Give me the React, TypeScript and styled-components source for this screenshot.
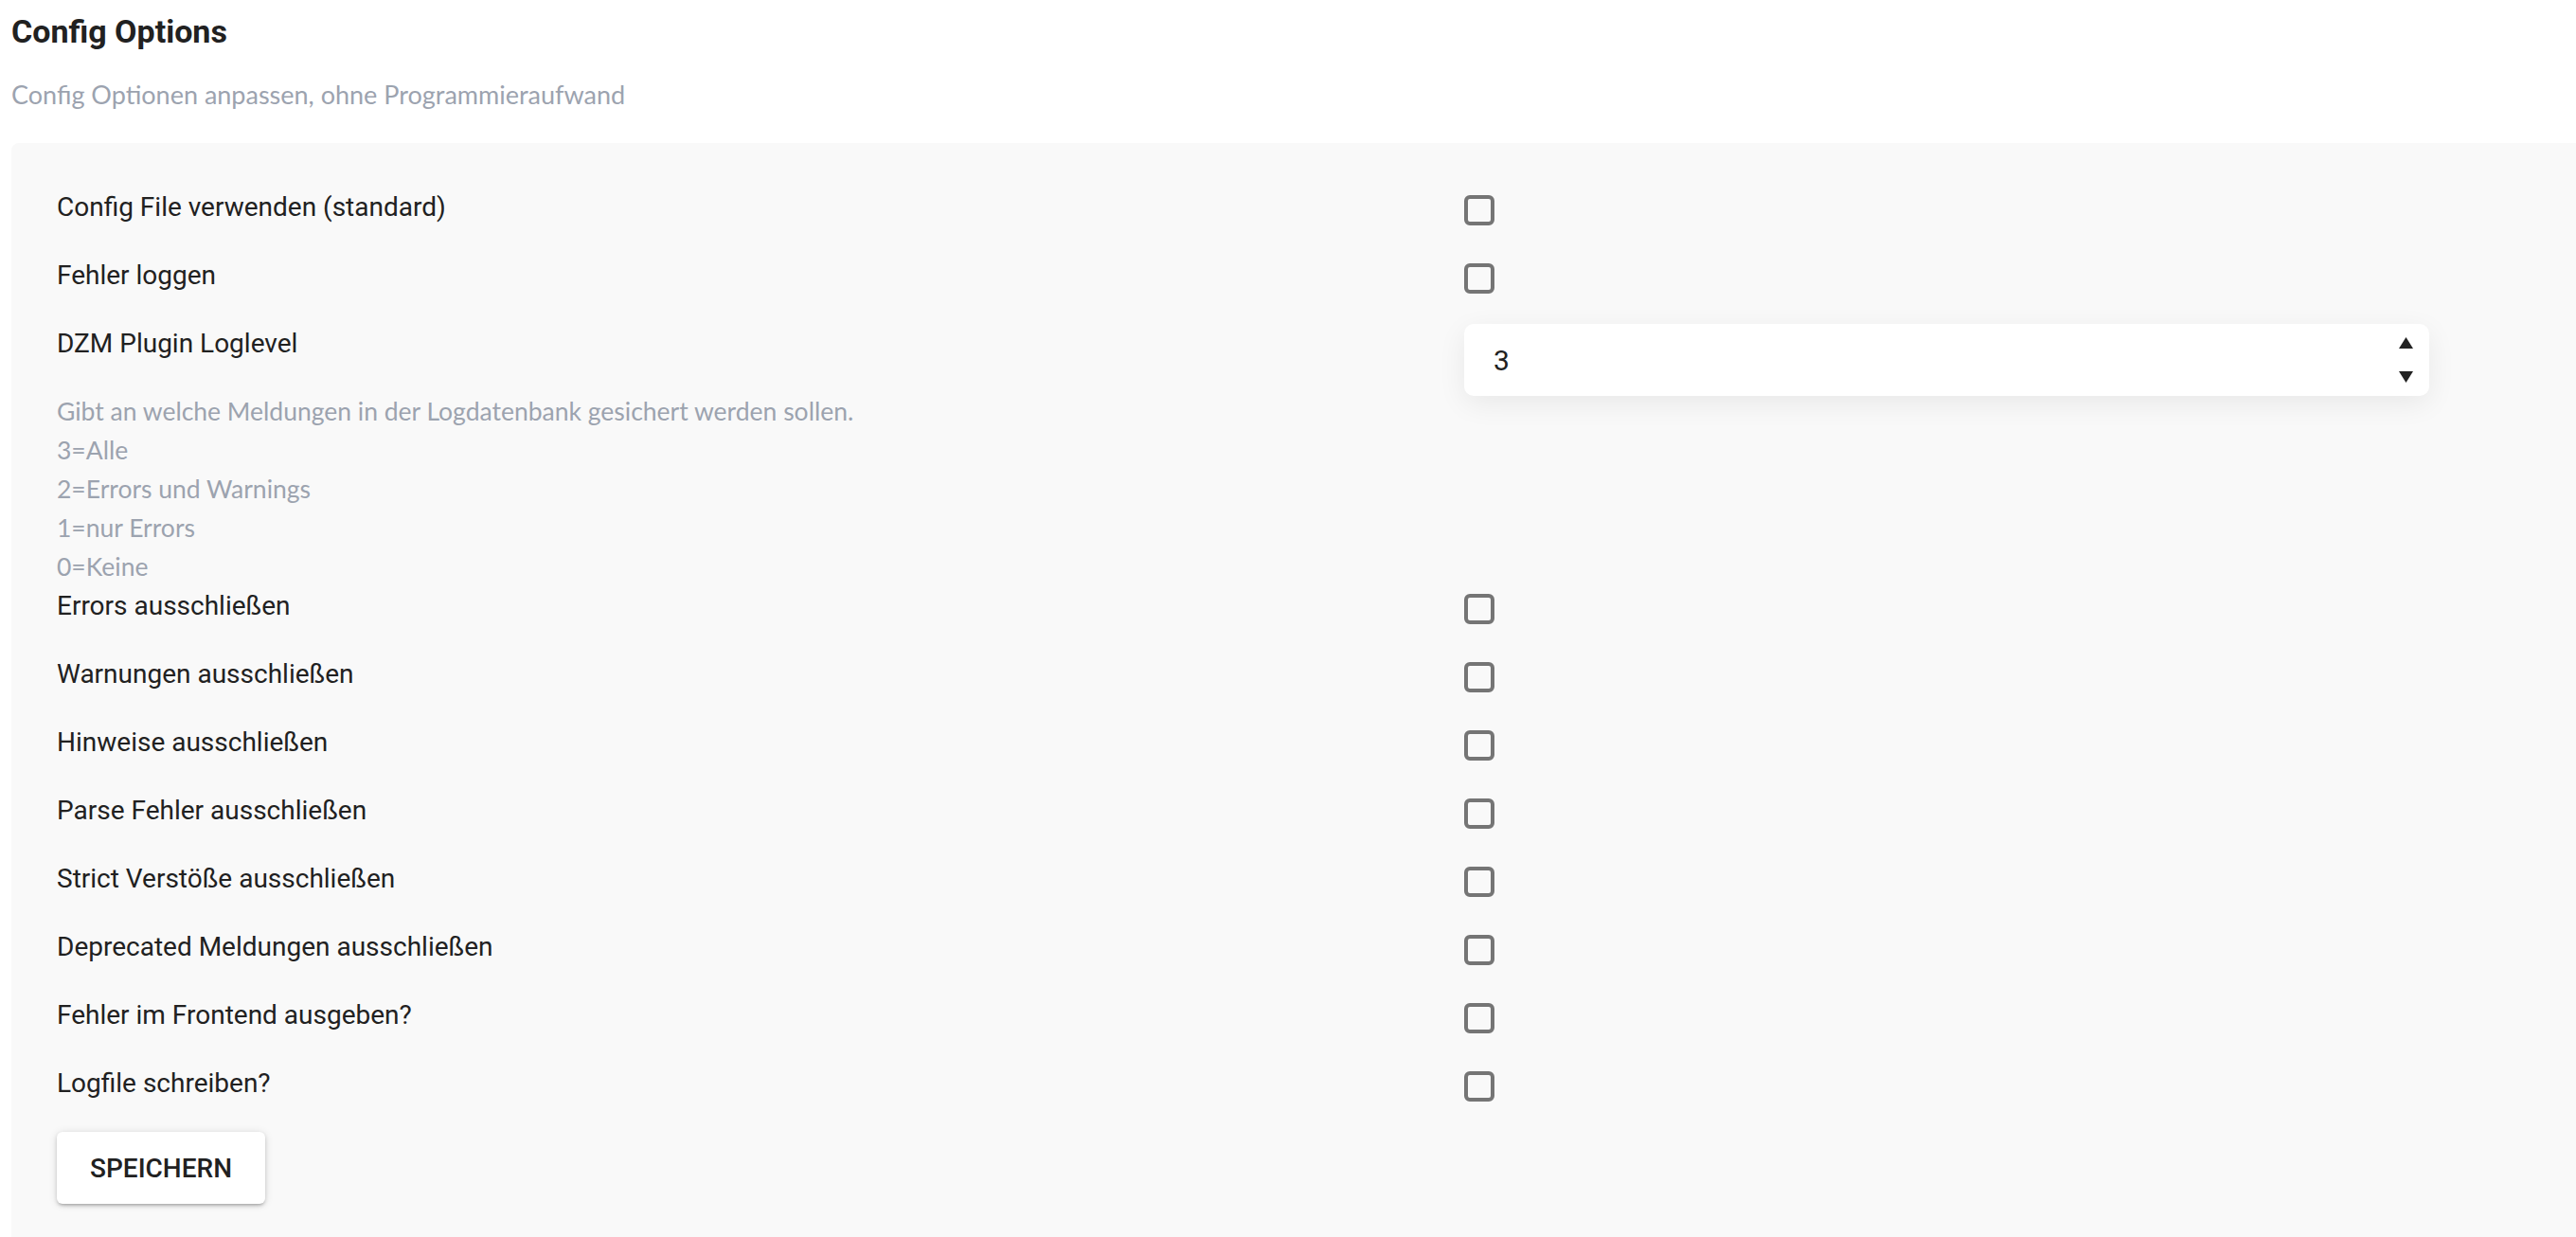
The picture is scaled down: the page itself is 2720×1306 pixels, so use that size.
import { FC, useState } from "react";
import styled, { createGlobalStyle } from "styled-components";

const GlobalStyle = createGlobalStyle`
  html, body {
    margin: 0;
    padding: 0;
    background: #ffffff;
  }
  body {
    font-family: Roboto, "Liberation Sans", sans-serif;
    color: #212121;
    overflow: hidden;
  }
`;

const Page = styled.div`
  padding: 12px 0 0 12px;
`;

const Title = styled.h2`
  margin: 0;
  font: 700 34px/42px Roboto, "Liberation Sans", sans-serif;
  color: #212121;
`;

const Subtitle = styled.p`
  margin: 25px 0 31px;
  font: 400 27px/41px Lato, "Noto Sans", sans-serif;
  color: #9ca3af;
`;

const Panel = styled.form`
  background: #f9f9f9;
  border-radius: 8px 0 0 0;
  padding: 47px 48px 48px;
`;

const Row = styled.div<{ $tight?: boolean }>`
  display: grid;
  grid-template-columns: 1486px 1fr;
  align-items: start;
  margin-bottom: ${(p) => (p.$tight ? 0 : 30)}px;
`;

const Label = styled.label`
  display: block;
  font: 400 28px/42px Roboto, "Liberation Sans", sans-serif;
  color: #212121;
`;

const Help = styled.div`
  margin-top: 30px;
  font: 400 26.5px/41px Lato, "Noto Sans", sans-serif;
  color: #9ca3af;
`;

const Check = styled.input`
  appearance: none;
  display: block;
  width: 32px;
  height: 32px;
  margin: 8px 0 0 0;
  border: 4px solid #757575;
  border-radius: 6px;
  background: transparent;
  cursor: pointer;

  &:checked {
    background: #1976d2;
    border-color: #1976d2;
  }
`;

const NumberField = styled.div`
  display: flex;
  align-items: center;
  width: 1019px;
  height: 76px;
  background: #ffffff;
  border-radius: 10px;
  box-shadow: 0 8px 30px rgba(0, 0, 0, 0.07);
`;

const NumberInput = styled.input`
  flex: 1;
  min-width: 0;
  height: 100%;
  border: 0;
  outline: 0;
  background: transparent;
  padding: 0 0 0 31px;
  font: 400 30px Roboto, "Liberation Sans", sans-serif;
  color: #212121;
  appearance: textfield;

  &::-webkit-inner-spin-button,
  &::-webkit-outer-spin-button {
    appearance: none;
    margin: 0;
  }
`;

const Spinner = styled.div`
  display: flex;
  flex-direction: column;
  gap: 24px;
  padding-right: 17px;
`;

const Arrow = styled.button`
  display: block;
  padding: 0;
  border: 0;
  background: none;
  cursor: pointer;
  line-height: 0;
`;

const SaveButton = styled.button`
  height: 76px;
  padding: 0 35px;
  border: 0;
  border-radius: 6px;
  background: #ffffff;
  font: 500 28px Roboto, "Liberation Sans", sans-serif;
  color: #212121;
  text-transform: uppercase;
  cursor: pointer;
  box-shadow: 0 3px 3px -2px rgba(0, 0, 0, 0.2), 0 2px 4px rgba(0, 0, 0, 0.14),
    0 1px 10px rgba(0, 0, 0, 0.12);
`;

const before = ["Config File verwenden (standard)", "Fehler loggen"];

const after = [
  "Errors ausschließen",
  "Warnungen ausschließen",
  "Hinweise ausschließen",
  "Parse Fehler ausschließen",
  "Strict Verstöße ausschließen",
  "Deprecated Meldungen ausschließen",
  "Fehler im Frontend ausgeben?",
  "Logfile schreiben?",
];

const helpLines = [
  "Gibt an welche Meldungen in der Logdatenbank gesichert werden sollen.",
  "3=Alle",
  "2=Errors und Warnings",
  "1=nur Errors",
  "0=Keine",
];

const CheckRow: FC<{ id: string; text: string }> = ({ id, text }) => (
  <Row>
    <Label htmlFor={id}>{text}</Label>
    <Check id={id} type="checkbox" />
  </Row>
);

const App: FC = () => {
  const [level, setLevel] = useState(3);

  return (
    <>
      <GlobalStyle />
      <Page>
        <Title>Config Options</Title>
        <Subtitle>Config Optionen anpassen, ohne Programmieraufwand</Subtitle>
        <Panel onSubmit={(e) => e.preventDefault()}>
          {before.map((t, i) => (
            <CheckRow key={t} id={`b${i}`} text={t} />
          ))}

          <Row $tight>
            <div>
              <Label htmlFor="loglevel">DZM Plugin Loglevel</Label>
              <Help>
                {helpLines.map((l) => (
                  <div key={l}>{l}</div>
                ))}
              </Help>
            </div>
            <NumberField>
              <NumberInput
                id="loglevel"
                type="number"
                value={level}
                onChange={(e) => setLevel(Number(e.target.value))}
              />
              <Spinner>
                <Arrow type="button" onClick={() => setLevel(level + 1)}>
                  <svg width="15" height="12" viewBox="0 0 15 12">
                    <path d="M7.5 0L15 12H0z" fill="#222" />
                  </svg>
                </Arrow>
                <Arrow type="button" onClick={() => setLevel(level - 1)}>
                  <svg width="15" height="12" viewBox="0 0 15 12">
                    <path d="M0 0h15L7.5 12z" fill="#222" />
                  </svg>
                </Arrow>
              </Spinner>
            </NumberField>
          </Row>

          {after.map((t, i) => (
            <CheckRow key={t} id={`a${i}`} text={t} />
          ))}

          <SaveButton type="submit">Speichern</SaveButton>
        </Panel>
      </Page>
    </>
  );
};

export default App;
